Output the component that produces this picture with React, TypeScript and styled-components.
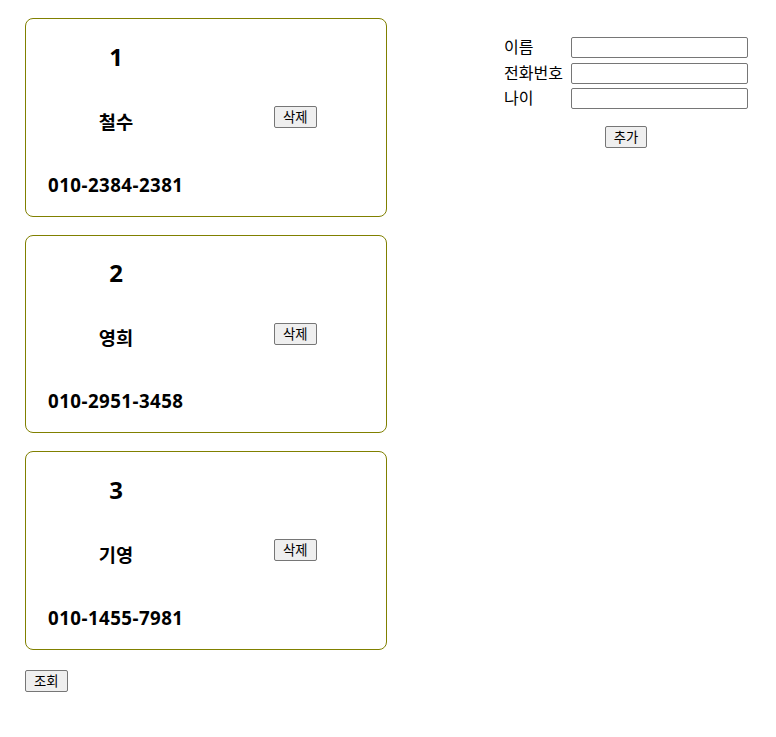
import React, { useState } from "react";
import styled, { createGlobalStyle } from "styled-components";

const GlobalStyle = createGlobalStyle`
  body {
    margin: 8px;
    font-family: "Noto Sans", "Noto Sans CJK KR", sans-serif;
    color: #000;
    background: #fff;
  }
`;

type Person = { id: number; name: string; phone: string };

const initial: Person[] = [
  { id: 1, name: "철수", phone: "010-2384-2381" },
  { id: 2, name: "영희", phone: "010-2951-3458" },
  { id: 3, name: "기영", phone: "010-1455-7981" },
];

const App: React.FC = () => {
  const [people, setPeople] = useState<Person[]>(initial);
  return (
    <>
      <GlobalStyle />
      <Page>
        <ListColumn>
          {people.map((p) => (
            <Card key={p.id}>
              <Num>{p.id}</Num>
              <Name>{p.name}</Name>
              <SmallButton
                className="btn_delete"
                onClick={() => setPeople(people.filter((x) => x.id !== p.id))}
              >
                삭제
              </SmallButton>
              <Phone>{p.phone}</Phone>
            </Card>
          ))}
          <ButtonRow>
            <SmallButton>조회</SmallButton>
          </ButtonRow>
        </ListColumn>
        <Form>
          <FieldGrid>
            <label>이름</label>
            <input type="text" />
            <label>전화번호</label>
            <input type="text" />
            <label>나이</label>
            <input type="text" />
          </FieldGrid>
          <FormFooter>
            <SmallButton>추가</SmallButton>
          </FormFooter>
        </Form>
      </Page>
    </>
  );
};

const Page = styled.div`
  display: flex;
  align-items: flex-start;
  padding: 10px 0 0 17px;
`;

const ListColumn = styled.div`
  width: 362px;
  display: flex;
  flex-direction: column;
  gap: 18px;
`;

const Card = styled.div`
  box-sizing: border-box;
  height: 198.5px;
  border: 1px solid #808000;
  border-radius: 8px;
  padding-top: 5px;
  display: grid;
  grid-template-columns: 180px 1fr;
  grid-template-rows: 64px 64px 64px;
`;

const Num = styled.h2`
  margin: 0;
  font-size: 24px;
  font-weight: bold;
  text-align: center;
  align-self: center;
`;

const Name = styled.h3`
  grid-row: 2;
  grid-column: 1;
  margin: 0;
  font-size: 18.72px;
  font-weight: bold;
  text-align: center;
  align-self: center;
`;

const Phone = styled.h3`
  grid-row: 3;
  grid-column: 1 / span 2;
  margin: 0;
  padding-left: 22px;
  font-size: 18.72px;
  letter-spacing: 0.45px;
  font-weight: bold;
  align-self: center;
`;

const SmallButton = styled.button`
  font-family: "Noto Sans CJK KR", "Noto Sans", sans-serif;
  font-size: 13.33px;
  line-height: 18px;
  padding: 1px 8px;
  background: #efefef;
  border: 1px solid #767676;
  border-radius: 2px;
  color: #000;
  cursor: pointer;
  &.btn_delete {
    grid-row: 2;
    grid-column: 2;
    justify-self: start;
    align-self: start;
    margin: 18px 0 0 68px;
  }
`;

const ButtonRow = styled.div`
  display: flex;
  margin-top: 2px;
`;

const Form = styled.div`
  margin: 19px 0 0 117px;
  display: flex;
  flex-direction: column;
  align-items: center;
  gap: 17px;
`;

const FieldGrid = styled.div`
  display: grid;
  grid-template-columns: 67px 177px;
  grid-auto-rows: 21px;
  row-gap: 4.5px;
  align-items: center;
  label {
    font-size: 16px;
    line-height: 21px;
    color: #000;
    white-space: nowrap;
  }
  input {
    box-sizing: border-box;
    width: 177px;
    height: 21px;
    margin: 0;
    border: 1px solid #767676;
    border-radius: 2px;
    padding: 1px 2px;
    outline: none;
  }
`;

const FormFooter = styled.div`
  display: flex;
  justify-content: center;
`;

export default App;
